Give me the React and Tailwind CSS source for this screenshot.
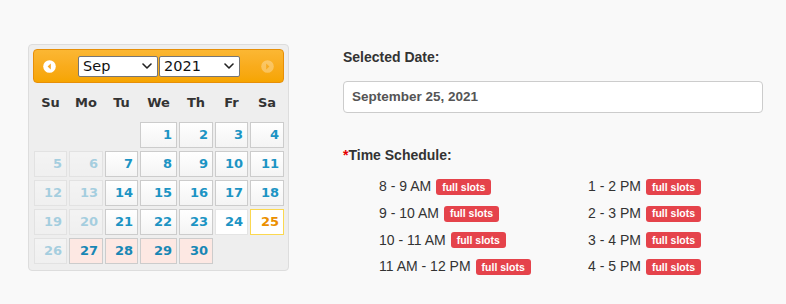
import React from "react";

const COLS = "grid-cols-[33px_34px_33px_37px_34px_33px_34px]";

function Cell({ d, kind }) {
  if (!d) return <div />;
  let cls =
    "h-[26px] border flex items-center justify-end pr-[4px] text-[13px] font-bold ";
  if (kind === "disabled")
    cls += "border-[#cccccc] bg-gradient-to-b from-[#ffffff] to-[#f3f3f3] text-[#1c94c4] opacity-35";
  else if (kind === "pink") cls += "border-[#cccccc] bg-[#fde8e3] text-[#1887b5]";
  else if (kind === "active") cls += "border-[#fbd850] bg-white text-[#eb8f00]";
  else if (kind === "today") cls += "border-[#e4e4e4] bg-white text-[#1c94c4]";
  else cls += "border-[#cccccc] bg-gradient-to-b from-[#ffffff] to-[#f4f4f4] text-[#1c94c4]";
  return <div className={cls}>{d}</div>;
}

function Select({ value, w }) {
  return (
    <div
      className={`${w} h-[21px] bg-white border border-[#767676] rounded-[2px] flex items-center justify-between pl-[4px] pr-[5px] text-[14.5px] text-[#111]`}
    >
      <span className="leading-none">{value}</span>
      <svg width="10" height="6" viewBox="0 0 10 6" fill="none">
        <path d="M1 1l4 4 4-4" stroke="#222" strokeWidth="1.6" strokeLinecap="round" strokeLinejoin="round" />
      </svg>
    </div>
  );
}

function Arrow({ dir, faded }) {
  return (
    <svg width="13" height="13" viewBox="0 0 13 13" className={faded ? "opacity-30" : ""}>
      <circle cx="6.5" cy="6.5" r="6.3" fill="#ffffff" />
      {dir === "left" ? (
        <path d="M7.8 3.6 L4.6 6.5 L7.8 9.4 Z" fill="#f6a828" />
      ) : (
        <path d="M5.2 3.6 L8.4 6.5 L5.2 9.4 Z" fill="#f6a828" />
      )}
    </svg>
  );
}

function Badge() {
  return (
    <span className="inline-flex items-center h-[16px] px-[6px] rounded-[3px] bg-[#e5434b] text-white text-[10.5px] font-bold leading-none">
      full slots
    </span>
  );
}

function Slot({ t }) {
  return (
    <div className="h-[26.7px] flex items-center gap-[5px]">
      <span className="text-[14px] text-[#333]">{t}</span>
      <Badge />
    </div>
  );
}

export default function App() {
  const rows = [
    [null, null, null, [1], [2], [3], [4]],
    [[5, "disabled"], [6, "disabled"], [7], [8], [9], [10], [11]],
    [[12, "disabled"], [13, "disabled"], [14], [15], [16], [17], [18]],
    [[19, "disabled"], [20, "disabled"], [21], [22], [23], [24, "today"], [25, "active"]],
    [[26, "disabled"], [27, "pink"], [28, "pink"], [29, "pink"], [30, "pink"], null, null],
  ];
  const dows = ["Su", "Mo", "Tu", "We", "Th", "Fr", "Sa"];
  const left = ["8 - 9 AM", "9 - 10 AM", "10 - 11 AM", "11 AM - 12 PM"];
  const right = ["1 - 2 PM", "2 - 3 PM", "3 - 4 PM", "4 - 5 PM"];

  return (
    <div className="min-h-[304px] w-[786px] bg-[#f9f9f9] flex items-start pt-[44px] pl-[28px] font-['Liberation_Sans',Arial,sans-serif]">
      {/* Calendar */}
      <div className="w-[261px] h-[227px] border border-[#dddddd] bg-[#eeeeee] rounded-[4px] p-[4px] font-['DejaVu_Sans',Verdana,sans-serif]">
        <div className="h-[34px] rounded-[4px] border border-[#e78f08] bg-gradient-to-b from-[#fbb733] via-[#f9ac1c] to-[#f6a500] flex items-center pl-[9px] pr-[9px]">
          <Arrow dir="left" />
          <div className="flex items-center gap-[1px] ml-[22px]">
            <Select value="Sep" w="w-[80px]" />
            <Select value="2021" w="w-[81px]" />
          </div>
          <div className="ml-auto">
            <Arrow dir="right" faded />
          </div>
        </div>
        <div className={`grid ${COLS} gap-x-[2px] h-[39px] items-center pl-[1px]`}>
          {dows.map((d) => (
            <div key={d} className="text-center text-[13px] font-bold text-[#333]">
              {d}
            </div>
          ))}
        </div>
        <div className={`grid ${COLS} gap-x-[2px] gap-y-[3px] pl-[1px]`}>
          {rows.flat().map((c, i) => (
            <Cell key={i} d={c ? c[0] : null} kind={c ? c[1] : null} />
          ))}
        </div>
      </div>

      {/* Right side */}
      <div className="ml-[54px] mt-[3px] w-[420px]">
        <div className="h-[20px] flex items-center text-[14px] font-bold text-[#333]">Selected Date:</div>
        <div className="mt-[14px] h-[32px] bg-white border border-[#cccccc] rounded-[4px] flex items-center pl-[8px] text-[13.5px] font-bold text-[#555]">
          September 25, 2021
        </div>
        <div className="mt-[32px] h-[20px] flex items-center text-[14px] font-bold text-[#333]">
          <span className="text-[#e60000]">*</span>Time Schedule:
        </div>
        <div className="mt-[8.5px] ml-[36px] grid grid-cols-[209px_auto]">
          <div className="flex flex-col">
            {left.map((t) => (
              <Slot key={t} t={t} />
            ))}
          </div>
          <div className="flex flex-col">
            {right.map((t) => (
              <Slot key={t} t={t} />
            ))}
          </div>
        </div>
      </div>
    </div>
  );
}
